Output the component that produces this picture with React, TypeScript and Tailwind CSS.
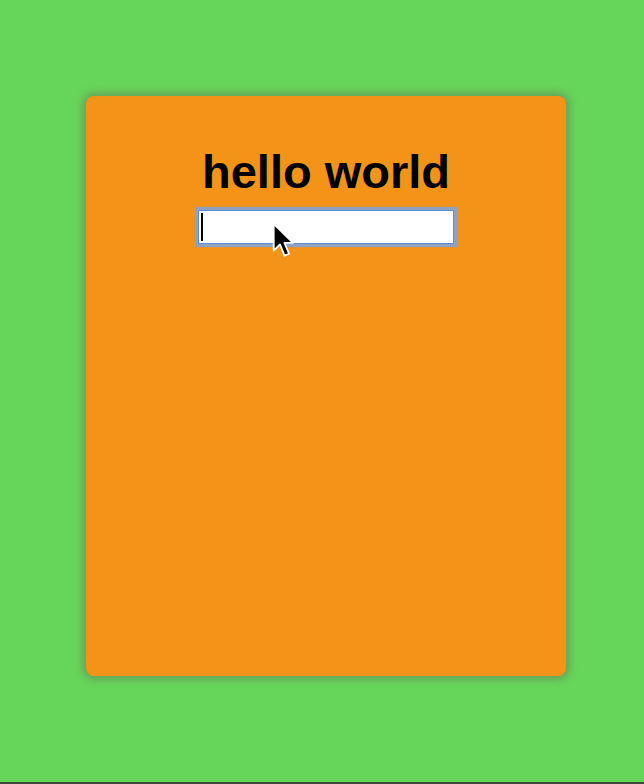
import React from 'react'

function MouseArrow() {
  return (
    <svg
      width="25"
      height="39"
      viewBox="0 0 22 34"
      className="absolute left-[272px] top-[222px] pointer-events-none"
    >
      <path
        d="M1.5 1.5 L1.5 25 L7 19.5 L11 29.5 L15 27.8 L11 18.2 L18.5 18.2 Z"
        fill="#000"
        stroke="#fff"
        strokeWidth="1.6"
        strokeLinejoin="round"
      />
    </svg>
  )
}

export default function App() {
  return (
    <div className="relative w-[644px] h-[784px] bg-[#66d65a] overflow-hidden" style={{ fontFamily: '"Liberation Sans", Arial, sans-serif' }}>
      <div className="pt-[96px] pl-[86px]">
        <div className="w-[480px] h-[580px] rounded-[8px] bg-[#f39317] shadow-[0_0_8px_3px_rgba(110,110,90,0.55)] flex flex-col items-center pt-[52px]">
          <h1 className="text-[47px] leading-none font-bold text-black">hello world</h1>
          <div className="mt-[15px] relative">
            <div className="w-[256px] h-[34px] bg-white border border-[#5d8fd6] shadow-[0_0_1px_3px_rgba(120,165,235,0.8)]" />
            <div className="absolute left-[3px] top-[3px] w-[2px] h-[28px] bg-black" />
          </div>
        </div>
      </div>
      <MouseArrow />
      <div className="absolute left-0 right-0 bottom-0 h-[2px] bg-[#3b4a3b]" />
    </div>
  )
}
